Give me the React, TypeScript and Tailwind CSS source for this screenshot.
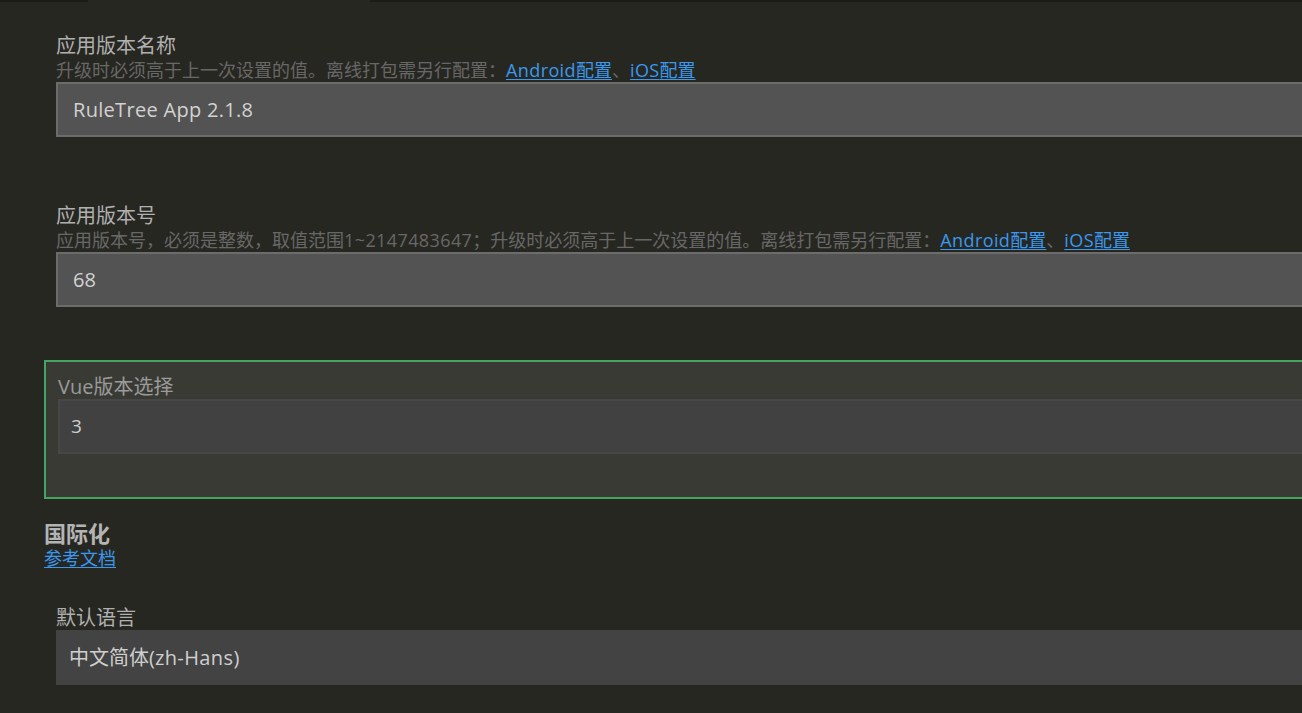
import React from "react";

const font = { fontFamily: '"Open Sans", "Noto Sans CJK SC", sans-serif' };

function Link({ children }: { children: React.ReactNode }) {
  return <span className="text-[#3a98ee] underline underline-offset-2 decoration-1">{children}</span>;
}

function Lat({ children }: { children: React.ReactNode }) {
  return <span className="tracking-[0.4px]">{children}</span>;
}

export default function App() {
  return (
    <div className="w-[1302px] h-[713px] overflow-hidden bg-[#272722]" style={font}>
      <div className="flex h-[2px]">
        <div className="w-[88px] bg-[#1b1b18]" />
        <div className="w-[282px]" />
        <div className="flex-1 bg-[#1b1b18]" />
      </div>
      <div className="w-[1420px] pt-[32px]">
        <div className="pl-[56px]">
          <div className="text-[20px] leading-[24px] text-[#b0b0b0]">应用版本名称</div>
          <div className="text-[18px] leading-[24px] text-[#676767] whitespace-nowrap">
            升级时必须高于上一次设置的值。离线打包需另行配置：<Link><Lat>Android</Lat>配置</Link>、<Link><Lat>iOS</Lat>配置</Link>
          </div>
          <div className="h-[55px] bg-[#535353] border-2 border-[#6c6c6c] flex items-center pl-[15px] text-[20px] tracking-[0.3px] text-[#d2d2d2]">
            RuleTree App 2.1.8
          </div>
        </div>

        <div className="pl-[56px] mt-[67px]">
          <div className="text-[20px] leading-[24px] text-[#b0b0b0]">应用版本号</div>
          <div className="text-[18px] leading-[24px] text-[#676767] whitespace-nowrap">
            应用版本号，必须是整数，取值范围<Lat>1~2147483647</Lat>；升级时必须高于上一次设置的值。离线打包需另行配置：<Link><Lat>Android</Lat>配置</Link>、<Link><Lat>iOS</Lat>配置</Link>
          </div>
          <div className="h-[55px] bg-[#535353] border-2 border-[#6c6c6c] flex items-center pl-[15px] text-[20px] text-[#d2d2d2]">
            68
          </div>
        </div>

        <div className="ml-[44px] mt-[53px] border-2 border-[#45a462] bg-[#3a3a35] pl-[12px] pt-[13px] pb-[43px]">
          <div className="text-[20px] leading-[24px] text-[#9a9a9a]">Vue版本选择</div>
          <div className="h-[55px] bg-[#414141] border-2 border-[#474747] flex items-center pl-[11px] text-[19px] text-[#cfcfcf]">
            3
          </div>
        </div>

        <div className="pl-[44px] mt-[21px]">
          <div className="text-[22px] leading-[26px] font-bold text-[#b4b4b4]">国际化</div>
          <div className="text-[18px] leading-[24px]">
            <Link>参考文档</Link>
          </div>
        </div>

        <div className="pl-[56px] mt-[36px]">
          <div className="text-[20px] leading-[24px] text-[#b0b0b0]">默认语言</div>
          <div className="h-[55px] bg-[#434343] flex items-center pl-[13px] text-[20px] text-[#cfcfcf]">
            中文简体(<Lat>zh-Hans</Lat>)
          </div>
        </div>
      </div>
    </div>
  );
}
